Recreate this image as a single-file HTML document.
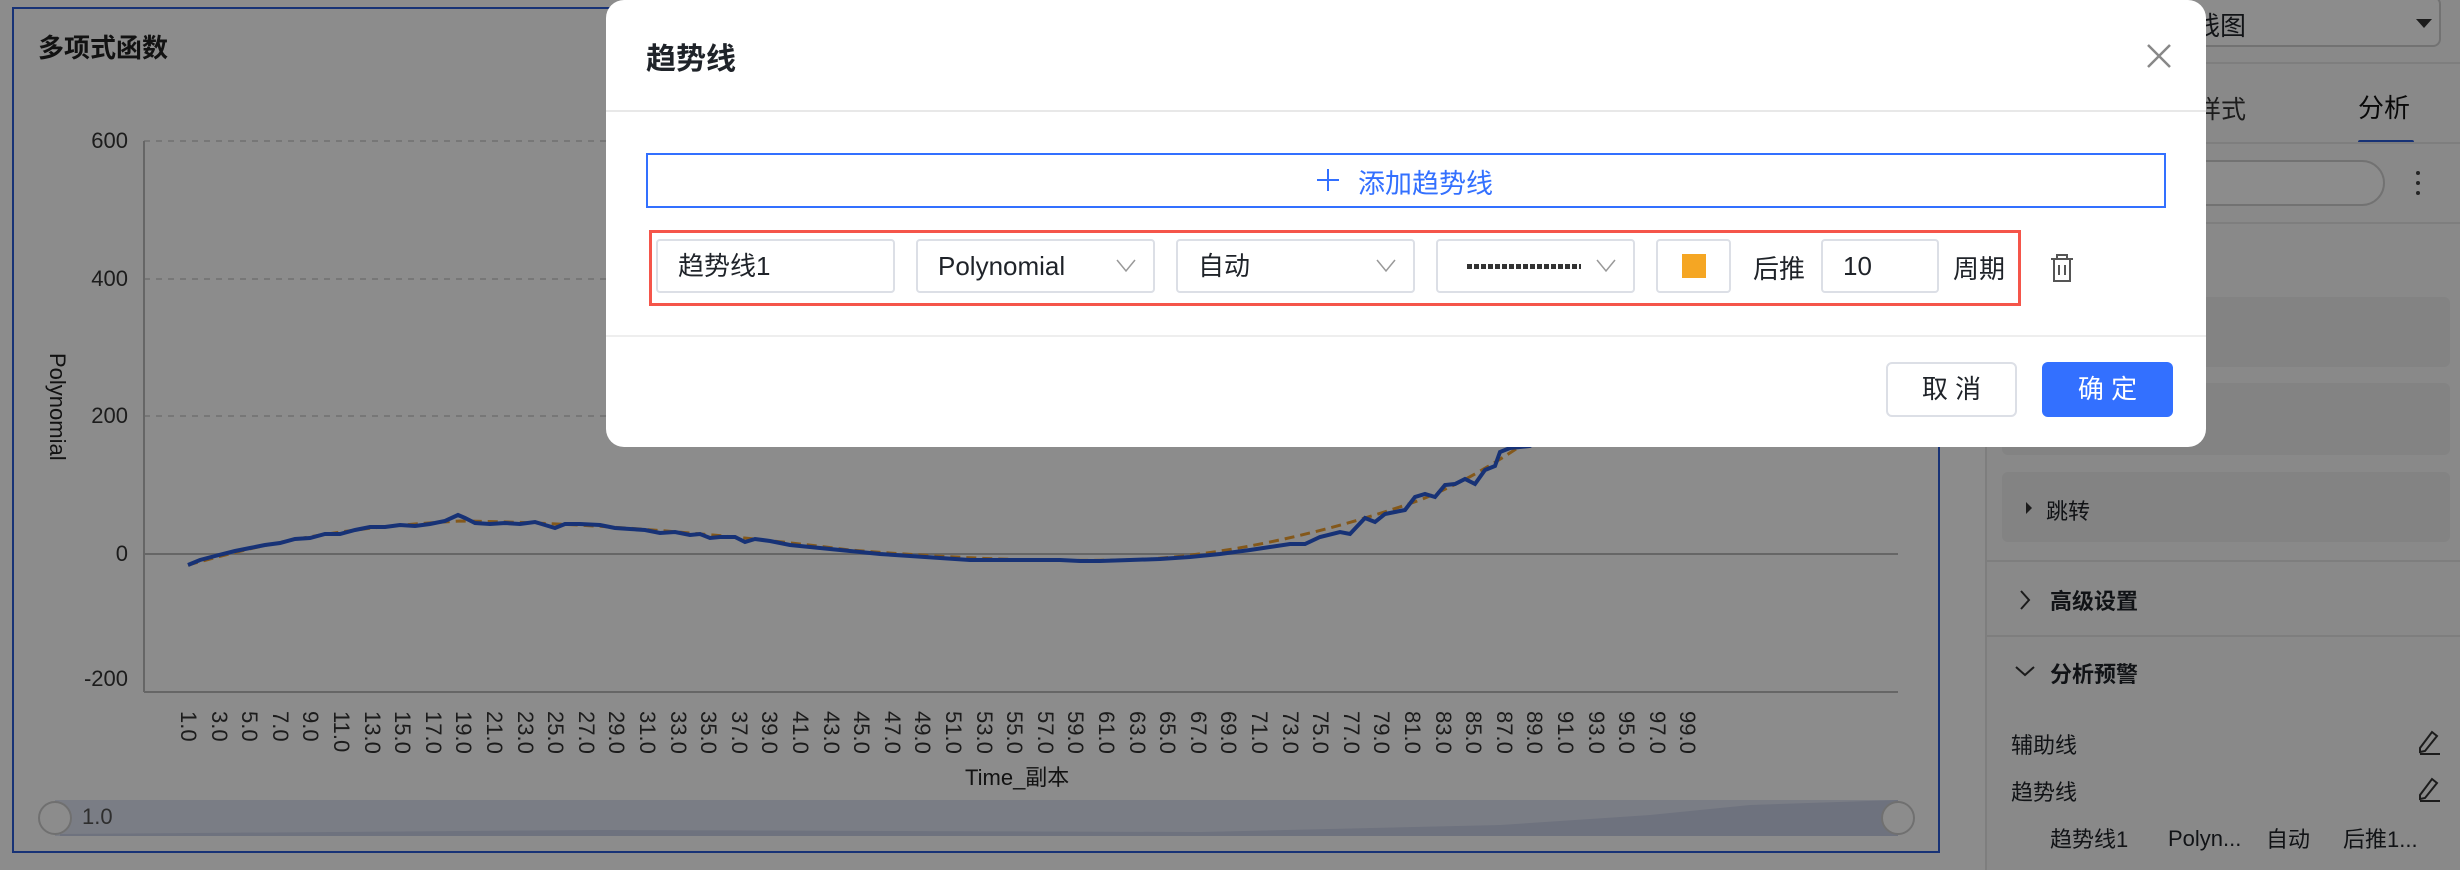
<!DOCTYPE html>
<html><head><meta charset="utf-8">
<style>
*{box-sizing:border-box;margin:0;padding:0}
body{width:2460px;height:870px;position:relative;overflow:hidden;background:#fff;font-family:"Liberation Sans","Noto Sans CJK SC",sans-serif;color:#1f2329}
.a{position:absolute}
.xl{position:absolute;top:711px;writing-mode:vertical-rl;font-size:22px;color:#333;line-height:22px;width:22px}
.yl{position:absolute;font-size:22px;color:#333;text-align:right;width:60px;left:68px}
.inp{position:absolute;top:239px;height:54px;border:2px solid #dcdfe6;border-radius:4px;font-size:26px;line-height:50px;color:#1f2329;background:#fff}
.chev{position:absolute;top:14px;width:20px;height:20px}
.blk{position:absolute;left:2002px;width:448px;background:#eeeeee;border-radius:6px}
.rt{position:absolute;font-size:22px;color:#1f2329}
</style></head><body>
<div class="a" style="left:12px;top:7px;width:1928px;height:846px;border:2px solid #2a5bd7"></div>
<div class="a" style="left:38px;top:28px;font-size:26px;font-weight:bold;color:#222">多项式函数</div>
<div class="yl" style="top:128px">600</div>
<div class="yl" style="top:266px">400</div>
<div class="yl" style="top:403px">200</div>
<div class="yl" style="top:541px">0</div>
<div class="yl" style="top:666px">-200</div>
<div class="a" style="left:44px;top:353px;writing-mode:vertical-rl;font-size:22px;color:#222">Polynomial</div>
<svg class="a" style="left:0;top:0" width="2460" height="870">
<g stroke="#ccc" stroke-width="1.5" stroke-dasharray="6,6">
<line x1="144" y1="141" x2="1898" y2="141"/><line x1="144" y1="279" x2="1898" y2="279"/><line x1="144" y1="416" x2="1898" y2="416"/></g>
<line x1="144" y1="554" x2="1898" y2="554" stroke="#bbb" stroke-width="2"/>
<line x1="144" y1="692" x2="1898" y2="692" stroke="#bbb" stroke-width="2"/>
<line x1="144" y1="141" x2="144" y2="692" stroke="#bbb" stroke-width="2"/>
<path d="M188,565 C260,545 330,528 460,521 C560,522 700,531 850,550 C950,558 1050,563 1150,559 C1250,552 1350,525 1420,500 C1470,480 1500,460 1560,420 L1700,300" fill="none" stroke="#f0a030" stroke-width="3" stroke-dasharray="10,6"/>
<path d="M188,565 L200,560 L215,556 L235,551 L250,548 L265,545 L280,543 L295,539 L310,538 L325,534 L340,534 L355,530 L370,527 L385,527 L400,525 L415,526 L430,524 L445,521 L458,515 L465,518 L475,523 L490,524 L505,523 L520,524 L535,522 L545,525 L555,528 L565,524 L580,524 L600,525 L615,528 L630,529 L645,530 L660,533 L675,532 L690,535 L700,534 L710,538 L720,537 L735,537 L745,542 L755,539 L770,541 L790,545 L810,547 L830,549 L850,551 L880,554 L910,556 L940,558 L970,560 L1000,560 L1030,560 L1060,560 L1080,561 L1100,561 L1130,560 L1160,559 L1190,557 L1220,554 L1250,550 L1270,547 L1290,544 L1305,544 L1320,537 L1340,532 L1350,534 L1365,518 L1375,522 L1385,514 L1395,512 L1405,510 L1415,497 L1425,494 L1435,497 L1445,485 L1455,484 L1465,479 L1475,484 L1485,470 L1495,466 L1500,452 L1510,448 L1530,446 L1560,420 L1600,380 L1700,300" fill="none" stroke="#2a5bd7" stroke-width="4"/>
<rect x="55" y="800" width="1843" height="36" fill="#dfe4f3"/>
<path d="M60,834 L600,830 L1200,832 L1500,825 L1650,815 L1750,805 L1898,800 L1898,836 L60,836Z" fill="#c9d0e6"/>
<circle cx="55" cy="818" r="16" fill="#fff" stroke="#ccc" stroke-width="2"/>
<circle cx="1898" cy="818" r="16" fill="#fff" stroke="#ccc" stroke-width="2"/>
</svg>
<div class="a" style="left:82px;top:804px;font-size:22px;color:#555">1.0</div>
<div class="a" style="left:965px;top:760px;font-size:22px;color:#222">Time_副本</div>
<div class="xl" style="left:177px">1.0</div><div class="xl" style="left:208px">3.0</div><div class="xl" style="left:238px">5.0</div><div class="xl" style="left:269px">7.0</div><div class="xl" style="left:299px">9.0</div><div class="xl" style="left:330px">11.0</div><div class="xl" style="left:361px">13.0</div><div class="xl" style="left:391px">15.0</div><div class="xl" style="left:422px">17.0</div><div class="xl" style="left:452px">19.0</div><div class="xl" style="left:483px">21.0</div><div class="xl" style="left:514px">23.0</div><div class="xl" style="left:544px">25.0</div><div class="xl" style="left:575px">27.0</div><div class="xl" style="left:605px">29.0</div><div class="xl" style="left:636px">31.0</div><div class="xl" style="left:667px">33.0</div><div class="xl" style="left:697px">35.0</div><div class="xl" style="left:728px">37.0</div><div class="xl" style="left:758px">39.0</div><div class="xl" style="left:789px">41.0</div><div class="xl" style="left:820px">43.0</div><div class="xl" style="left:850px">45.0</div><div class="xl" style="left:881px">47.0</div><div class="xl" style="left:911px">49.0</div><div class="xl" style="left:942px">51.0</div><div class="xl" style="left:973px">53.0</div><div class="xl" style="left:1003px">55.0</div><div class="xl" style="left:1034px">57.0</div><div class="xl" style="left:1064px">59.0</div><div class="xl" style="left:1095px">61.0</div><div class="xl" style="left:1126px">63.0</div><div class="xl" style="left:1156px">65.0</div><div class="xl" style="left:1187px">67.0</div><div class="xl" style="left:1217px">69.0</div><div class="xl" style="left:1248px">71.0</div><div class="xl" style="left:1279px">73.0</div><div class="xl" style="left:1309px">75.0</div><div class="xl" style="left:1340px">77.0</div><div class="xl" style="left:1370px">79.0</div><div class="xl" style="left:1401px">81.0</div><div class="xl" style="left:1432px">83.0</div><div class="xl" style="left:1462px">85.0</div><div class="xl" style="left:1493px">87.0</div><div class="xl" style="left:1523px">89.0</div><div class="xl" style="left:1554px">91.0</div><div class="xl" style="left:1585px">93.0</div><div class="xl" style="left:1615px">95.0</div><div class="xl" style="left:1646px">97.0</div><div class="xl" style="left:1676px">99.0</div>

<div class="a" style="left:1985px;top:0;width:475px;height:870px;background:#fafafa;border-left:2px solid #e5e5e5"></div>
<div class="a" style="left:2000px;top:-4px;width:441px;height:51px;border:2px solid #d0d0d0;border-radius:8px;background:#fff"></div>
<div class="a" style="left:2194px;top:6px;font-size:26px">线图</div>
<div class="a" style="left:2416px;top:19px;border-left:8px solid transparent;border-right:8px solid transparent;border-top:9px solid #333"></div>
<div class="a" style="left:1987px;top:62px;width:473px;height:2px;background:#e5e5e5"></div>
<div class="a" style="left:2196px;top:90px;font-size:25px;color:#333">样式</div>
<div class="a" style="left:2358px;top:88px;font-size:26px;color:#111">分析</div>
<div class="a" style="left:2358px;top:140px;width:56px;height:4px;background:#2a5bd7;border-radius:2px"></div>
<div class="a" style="left:1987px;top:142px;width:473px;height:2px;background:#e5e5e5"></div>
<div class="a" style="left:1995px;top:160px;width:390px;height:46px;border:2px solid #d0d0d0;border-radius:23px;background:#fff"></div>
<div class="a" style="left:2416px;top:171px;width:4px;height:4px;background:#444;border-radius:2px;box-shadow:0 10px 0 #444,0 20px 0 #444"></div>
<div class="a" style="left:1987px;top:222px;width:473px;height:2px;background:#e5e5e5"></div>
<div class="blk" style="top:297px;height:70px"></div>
<div class="blk" style="top:383px;height:72px"></div>
<div class="blk" style="top:472px;height:70px"></div>
<div class="a" style="left:2026px;top:502px;border-top:6px solid transparent;border-bottom:6px solid transparent;border-left:6px solid #333"></div>
<div class="rt" style="left:2046px;top:494px">跳转</div>
<div class="a" style="left:1987px;top:560px;width:473px;height:2px;background:#e5e5e5"></div>
<svg class="a" style="left:2018px;top:589px" width="14" height="22"><path d="M3,2 L11,11 L3,20" fill="none" stroke="#333" stroke-width="2"/></svg>
<div class="rt" style="left:2050px;top:584px;font-weight:bold">高级设置</div>
<div class="a" style="left:1987px;top:635px;width:473px;height:2px;background:#e5e5e5"></div>
<svg class="a" style="left:2014px;top:664px" width="22" height="14"><path d="M2,3 L11,11 L20,3" fill="none" stroke="#333" stroke-width="2"/></svg>
<div class="rt" style="left:2050px;top:657px;font-weight:bold">分析预警</div>
<div class="rt" style="left:2011px;top:728px">辅助线</div>
<div class="rt" style="left:2011px;top:775px">趋势线</div>
<svg class="a" style="left:2416px;top:728px" width="26" height="28"><path d="M4,20 L16,4 L21,8 L9,23 L4,24Z M4,26 L24,26" fill="none" stroke="#333" stroke-width="2"/></svg>
<svg class="a" style="left:2416px;top:775px" width="26" height="28"><path d="M4,20 L16,4 L21,8 L9,23 L4,24Z M4,26 L24,26" fill="none" stroke="#333" stroke-width="2"/></svg>
<div class="rt" style="left:2050px;top:822px">趋势线1</div>
<div class="rt" style="left:2168px;top:826px">Polyn...</div>
<div class="rt" style="left:2266px;top:822px">自动</div>
<div class="rt" style="left:2343px;top:822px">后推1...</div>

<div class="a" style="left:0;top:0;width:2460px;height:870px;background:rgba(0,0,0,0.45)"></div>

<div class="a" style="left:606px;top:0;width:1600px;height:447px;background:#fff;border-radius:18px"></div>
<div class="a" style="left:646px;top:34px;font-size:30px;font-weight:bold;color:#1f2329">趋势线</div>
<svg class="a" style="left:2146px;top:43px" width="26" height="26"><path d="M2,2 L24,24 M24,2 L2,24" stroke="#888" stroke-width="2.5"/></svg>
<div class="a" style="left:606px;top:110px;width:1600px;height:2px;background:#e8e8e8"></div>
<div class="a" style="left:646px;top:153px;width:1520px;height:55px;border:2.5px solid #3370ff"></div>
<svg class="a" style="left:1316px;top:168px" width="24" height="24"><path d="M12,1 V23 M1,12 H23" stroke="#3370ff" stroke-width="2"/></svg>
<div class="a" style="left:1358px;top:162px;font-size:27px;color:#3370ff">添加趋势线</div>
<div class="a" style="left:649px;top:230px;width:1372px;height:76px;border:3px solid #f5554a"></div>
<div class="inp" style="left:656px;width:239px;padding-left:20px">趋势线1</div>
<div class="inp" style="left:916px;width:239px;padding-left:20px">Polynomial<svg class="chev" style="left:198px"><path d="M1,5 L10,16 L19,5" fill="none" stroke="#999" stroke-width="1.5"/></svg></div>
<div class="inp" style="left:1176px;width:239px;padding-left:20px">自动<svg class="chev" style="left:198px"><path d="M1,5 L10,16 L19,5" fill="none" stroke="#999" stroke-width="1.5"/></svg></div>
<div class="inp" style="left:1436px;width:199px"><div class="a" style="left:29px;top:23px;width:114px;height:5px;background:repeating-linear-gradient(90deg,#333 0 5px,transparent 5px 7px)"></div><svg class="chev" style="left:158px"><path d="M1,5 L10,16 L19,5" fill="none" stroke="#999" stroke-width="1.5"/></svg></div>
<div class="inp" style="left:1656px;width:75px"><div class="a" style="left:24px;top:13px;width:24px;height:24px;background:#f5a623"></div></div>
<div class="a" style="left:1753px;top:249px;font-size:26px">后推</div>
<div class="inp" style="left:1821px;width:118px;padding-left:20px">10</div>
<div class="a" style="left:1953px;top:249px;font-size:26px">周期</div>
<svg class="a" style="left:2049px;top:253px" width="26" height="30"><path d="M2,6 H24 M8,6 V2 H18 V6 M5,6 V28 H21 V6 M10,12 V22 M16,12 V22" fill="none" stroke="#555" stroke-width="2"/></svg>
<div class="a" style="left:606px;top:335px;width:1600px;height:2px;background:#eeeeee"></div>
<div class="a" style="left:1886px;top:362px;width:131px;height:55px;border:2px solid #dcdfe6;border-radius:6px;font-size:26px;line-height:51px;text-align:center;color:#1f2329">取 消</div>
<div class="a" style="left:2042px;top:362px;width:131px;height:55px;background:#3370ff;border-radius:6px;font-size:26px;line-height:55px;text-align:center;color:#fff">确 定</div>
</body></html>
